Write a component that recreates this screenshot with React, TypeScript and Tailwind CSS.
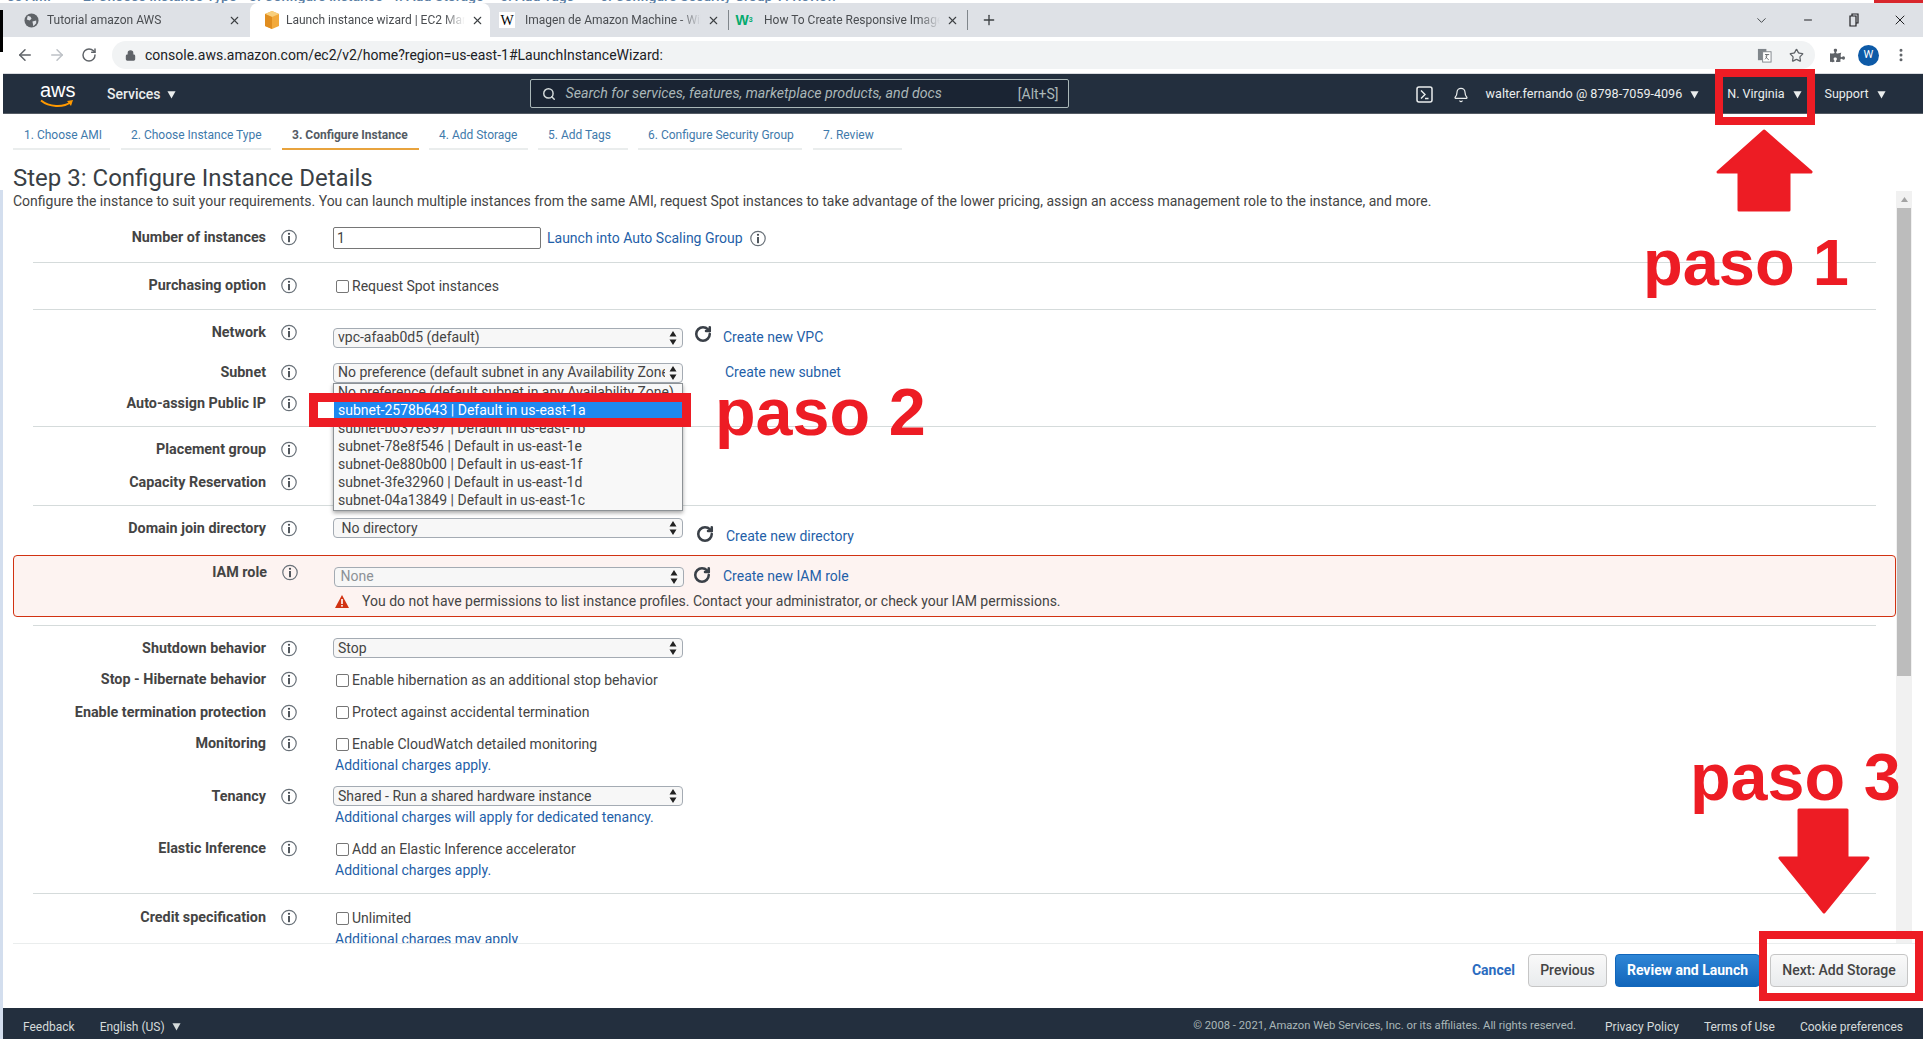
import React from 'react'
import { ArrowLeft, ArrowRight, RotateCw, Lock, Star, EllipsisVertical, X, Plus, ChevronDown, Minus, Bell, Search } from 'lucide-react'
import { FaPuzzlePiece } from 'react-icons/fa'

const Caret = ({ className = '' }: { className?: string }) => (
    <svg width="9" height="9" viewBox="0 0 10 10" className={className}>
        <path d="M0.5 1.5h9L5 9.5z" fill="currentColor" />
    </svg>
)

const Info = () => (
    <svg width="16" height="17" viewBox="0 0 16 17">
        <circle cx="8" cy="8.5" r="7.2" fill="none" stroke="#687078" strokeWidth="1.2" />
        <circle cx="8" cy="4.8" r="1.1" fill="#3f454c" />
        <rect x="7.1" y="7" width="1.8" height="6.2" fill="#3f454c" />
    </svg>
)

const Refresh = () => <RotateCw size={18} strokeWidth={3.4} className="text-[#3a4048]" />

const SelectBox = ({ value, muted }: { value: string, muted?: boolean }) => (
    <div className="relative w-[350px] h-[20px] rounded-[4px] border border-[#a4abb3] bg-[#f7f7f7] flex items-center pl-[4px] pr-[17px] overflow-hidden">
        <span className={`whitespace-nowrap overflow-hidden text-[14px] ${muted ? 'text-[#8c9196]' : 'text-[#444]'}`}>{value}</span>
        <svg width="8" height="14" viewBox="0 0 8 14" className="absolute right-[5px] top-[2px]">
            <path d="M4 0l3.5 5.5h-7zM4 14L0.5 8.5h7z" fill="#222" />
        </svg>
    </div>
)

const Row = ({ label, children, offset = 'pt-0', className = '' }: { label: string, children?: React.ReactNode, offset?: string, className?: string }) => (
    <div className={`flex items-start h-[24px] ${className}`}>
        <div className="w-[233px] h-[24px] pt-[1px] shrink-0 flex items-center justify-end text-[14.35px] font-bold text-[#444] whitespace-nowrap">{label}</div>
        <div className="w-[16px] h-[24px] shrink-0 ml-[15px] flex items-center"><Info /></div>
        <div className={`relative ml-[36px] flex-1 ${offset}`}>{children}</div>
    </div>
)

const Check = ({ text }: { text: string }) => (
    <div className="flex items-center h-[24px] pt-[1px] pl-[3px]">
        <div className="w-[13px] h-[13px] rounded-[2px] border border-[#767676] bg-white -mt-[1px]" />
        <span className="ml-[3px] text-[14px] text-[#444] whitespace-nowrap">{text}</span>
    </div>
)

const A = ({ children, className = '' }: { children: React.ReactNode, className?: string }) => (
    <span className={`text-[14px] text-[#1f5fa8] whitespace-nowrap ${className}`}>{children}</span>
)

const Divider = ({ className = '' }: { className?: string }) => <div className={`h-px bg-[#d5dbdb] ml-[30px] mr-[20px] ${className}`} />

const ChromeTab = ({ icon, title, active, className, gap }: { icon: React.ReactNode, title: string, active?: boolean, className: string, gap: string }) => (
    <div className={`flex items-center h-full ${active ? 'bg-white rounded-t-[8px]' : ''} ${className}`}>
        <div className="w-[16px] h-[16px] flex items-center justify-center shrink-0">{icon}</div>
        <span className={`flex-1 text-[12px] text-[#4a4d51] whitespace-nowrap overflow-hidden [mask-image:linear-gradient(to_right,black_88%,transparent)] ${gap}`}>{title}</span>
        <X size={13} strokeWidth={2} className="text-[#3c4043] shrink-0 ml-[6px]" />
    </div>
)

const wizardTabs = [
    { label: '1. Choose AMI', width: 'w-[97px] pl-[11px]' },
    { label: '2. Choose Instance Type', width: 'w-[150px] ml-[11px] pl-[10px]' },
    { label: '3. Configure Instance', width: 'w-[137px] ml-[11px] pl-[10px]', active: true },
    { label: '4. Add Storage', width: 'w-[99px] ml-[10px] pl-[10px]' },
    { label: '5. Add Tags', width: 'w-[90px] ml-[10px] pl-[10px]' },
    { label: '6. Configure Security Group', width: 'w-[164px] ml-[10px] pl-[10px]' },
    { label: '7. Review', width: 'w-[89px] ml-[11px] pl-[10px]' },
]

const subnets = [
    'No preference (default subnet in any Availability Zone)',
    'subnet-2578b643 | Default in us-east-1a',
    'subnet-b037e397 | Default in us-east-1b',
    'subnet-78e8f546 | Default in us-east-1e',
    'subnet-0e880b00 | Default in us-east-1f',
    'subnet-3fe32960 | Default in us-east-1d',
    'subnet-04a13849 | Default in us-east-1c',
]

const Annotations = () => (
    <>
        <div className="absolute z-20 left-[1715px] top-[69px] w-[100px] h-[56px] border-[8px] border-[#ed1c24]" />
        <div className="absolute z-20 left-[309px] top-[393px] w-[382px] h-[34px] border-[9px] border-[#ed1c24]" />
        <div className="absolute z-20 left-[318px] top-[402px] w-[16px] h-[16px] bg-white" />
        <div className="absolute z-20 left-[1759px] top-[931px] w-[164px] h-[70px] border-[8px] border-[#ed1c24]" />
        <svg className="absolute z-20 left-[1715px] top-[128px]" width="100" height="86" viewBox="0 0 100 86">
            <path d="M49 3L96 44H74V82H24V44H3z" fill="#ed1c24" stroke="#ed1c24" strokeWidth="3" strokeLinejoin="round" />
        </svg>
        <svg className="absolute z-20 left-[1776px] top-[807px]" width="96" height="108" viewBox="0 0 96 108">
            <path d="M23 3H71V51H92L48 105L4 51H23z" fill="#ed1c24" stroke="#ed1c24" strokeWidth="3" strokeLinejoin="round" />
        </svg>
        <div className="absolute z-20 left-[1643px] top-[230px] text-[65px] leading-none font-bold text-[#ed1c24] whitespace-nowrap [font-family:'Liberation_Sans',sans-serif]">paso 1</div>
        <div className="absolute z-20 left-[715px] top-[379px] text-[66.5px] leading-none font-bold text-[#ed1c24] whitespace-nowrap [font-family:'Liberation_Sans',sans-serif]">paso 2</div>
        <div className="absolute z-20 left-[1690px] top-[744px] text-[66.5px] leading-none font-bold text-[#ed1c24] whitespace-nowrap [font-family:'Liberation_Sans',sans-serif]">paso 3</div>
    </>
)

export default function App() {
    return (
        <div className="relative w-[1923px] h-[1039px] overflow-hidden bg-white flex [font-family:Roboto,sans-serif]">
            {/* left edge of the captured desktop */}
            <div className="w-[3px] shrink-0 flex flex-col">
                <div className="h-[3px] bg-white" />
                <div className="h-[7px] bg-[#dee1e6]" />
                <div className="h-[42px] bg-black" />
                <div className="h-[138px] bg-white" />
                <div className="flex-1 bg-[#d3deee]" />
            </div>

            <div className="flex-1 min-w-0 flex flex-col">
                {/* clipped page behind the browser */}
                <div className="h-[3px] overflow-hidden flex text-[14px] font-medium leading-[14px] text-[#5b7ea3] whitespace-nowrap">
                    <div className="-mt-[11px] flex">
                        <span className="w-[80px] text-right pr-[32px]">se AMI</span>
                        <span className="w-[166px]">2. Choose Instance Type</span>
                        <span className="w-[142px]">3. Configure Instance</span>
                        <span className="w-[109px]">4. Add Storage</span>
                        <span className="w-[100px]">5. Add Tags</span>
                        <span className="w-[177px]">6. Configure Security Group</span>
                        <span>7. Review</span>
                    </div>
                    <div className="ml-auto w-[49px] h-[3px] bg-[#d8262c]" />
                </div>

                {/* tab strip */}
                <div className="h-[34px] bg-[#dee1e6] flex items-center">
                    <ChromeTab className="w-[240px] pl-[20px] pr-[2px]" gap="ml-[8px]" title="Tutorial amazon AWS" icon={
                        <svg width="15" height="15" viewBox="0 0 16 16">
                            <circle cx="8" cy="8" r="7.5" fill="#5f6368" />
                            <path d="M4 3l3 1 1 2-2 2-3-1zM9 9l4-1 0 3-3 3z" fill="#dee1e6" />
                        </svg>
                    } />
                    <ChromeTab active className="w-[240px] ml-[7px] pl-[14px] pr-[6px]" gap="ml-[6px]" title="Launch instance wizard | EC2 Management" icon={
                        <svg width="14" height="18" viewBox="0 0 14 18">
                            <path d="M7 0L14 3V15L7 18L0 15V3z" fill="#f2a93b" />
                            <path d="M7 0L14 3L7 6L0 3z" fill="#f8cf7c" />
                            <path d="M7 6V18L0 15V3z" fill="#e08d1f" />
                        </svg>
                    } />
                    <ChromeTab className="w-[229px] ml-[9px] pr-[8px]" gap="ml-[10px]" title="Imagen de Amazon Machine - Wikipedia" icon={
                        <span className="w-[16px] h-[16px] bg-white flex items-center justify-center text-[14px] text-black [font-family:'Liberation_Serif',serif]">W</span>
                    } />
                    <div className="w-px h-[20px] bg-[#80868b]" />
                    <ChromeTab className="w-[238px] pl-[7px] pr-[8px]" gap="ml-[12px]" title="How To Create Responsive Images" icon={
                        <span className="text-[14px] font-bold text-[#04aa6d] leading-none [font-family:'Liberation_Sans',sans-serif]">W<sup className="text-[7px]">3</sup></span>
                    } />
                    <div className="w-px h-[20px] bg-[#80868b]" />
                    <Plus size={16} strokeWidth={2} className="ml-[13px] text-[#3c4043]" />
                    <ChevronDown size={15} strokeWidth={1.5} className="ml-auto text-[#3c4043]" />
                    <Minus size={12} strokeWidth={2} className="ml-[33px] text-[#202124]" />
                    <svg width="10" height="14" viewBox="0 0 10 14" className="ml-[35px]">
                        <path d="M3 3V1H9V10H7M1 3H7V13H1z" fill="none" stroke="#202124" strokeWidth="1.2" />
                    </svg>
                    <X size={16} strokeWidth={1.5} className="ml-[33px] mr-[15px] text-[#202124]" />
                </div>

                {/* address bar */}
                <div className="h-[37px] bg-white border-b border-[#dadce0] flex items-center">
                    <ArrowLeft size={18} strokeWidth={2} className="ml-[13px] text-[#5f6368]" />
                    <ArrowRight size={18} strokeWidth={2} className="ml-[14px] text-[#bdc1c6]" />
                    <RotateCw size={16} strokeWidth={2.2} className="ml-[15px] text-[#5f6368]" />
                    <div className="ml-[15px] w-[1703px] h-[28px] rounded-full bg-[#f1f3f4] flex items-center pl-[13px] pr-[11px]">
                        <Lock size={11} strokeWidth={2.5} fill="#5f6368" className="text-[#5f6368]" />
                        <span className="ml-[9px] text-[14px] text-[#202124] whitespace-nowrap">console.aws.amazon.com/ec2/v2/home?region=us-east-1#LaunchInstanceWizard:</span>
                        <svg width="15" height="15" viewBox="0 0 16 16" className="ml-auto">
                            <rect x="1" y="1" width="9" height="12" fill="#80868b" />
                            <rect x="6" y="4" width="9" height="11" fill="#fff" stroke="#80868b" />
                            <path d="M8.5 7h4.5M10.5 7c0 3-1 4-2 5M9.5 9c1 2 2 3 3 3.5" stroke="#5f6368" fill="none" />
                        </svg>
                        <Star size={15} strokeWidth={2} className="ml-[17px] text-[#5f6368]" />
                    </div>
                    <FaPuzzlePiece size={15} className="ml-[15px] text-[#5f6368]" />
                    <div className="ml-[13px] w-[21px] h-[21px] rounded-full bg-[#0d5aa7] flex items-center justify-center text-white text-[11px]">W</div>
                    <EllipsisVertical size={16} strokeWidth={2.5} className="ml-[14px] text-[#5f6368]" />
                </div>

                {/* aws nav */}
                <div className="h-[40px] bg-[#232f3e] border-b border-[#545b64] flex items-center pt-[2px] text-[#eaeded]">
                    <div className="relative ml-[37px] w-[33px] h-[32px] shrink-0">
                        <span className="absolute left-0 top-[1px] text-[20px] leading-[20px] text-white [font-family:'Liberation_Sans',sans-serif]">aws</span>
                        <svg width="34" height="10" viewBox="0 0 34 10" className="absolute left-0 top-[20px]">
                            <path d="M1 1.5C9 8 23 9 31 3" fill="none" stroke="#ff9900" strokeWidth="2" />
                            <path d="M27 2l6-1-2 6z" fill="#ff9900" />
                        </svg>
                    </div>
                    <span className="ml-[34px] text-[14px] font-medium">Services</span>
                    <Caret className="ml-[6px]" />
                    <div className="ml-[354px] w-[539px] h-[29px] -mt-[2px] rounded-[2px] border border-[#aab7b8] bg-[#1a2433] flex items-center pl-[11px] pr-[9px] pt-[1px] text-[#aab7b8]">
                        <Search size={14} strokeWidth={2.5} className="text-[#d5dbdb]" />
                        <span className="ml-[10px] text-[14.2px] italic whitespace-nowrap">Search for services, features, marketplace products, and docs</span>
                        <span className="ml-auto text-[14px]">[Alt+S]</span>
                    </div>
                    <svg width="17" height="17" viewBox="0 0 17 17" className="ml-[347px]">
                        <rect x="1" y="1" width="15" height="15" rx="2" fill="none" stroke="#eaeded" strokeWidth="1.5" />
                        <path d="M5 4.5L9 8.5L5 12.5M9 12.5h3.5" fill="none" stroke="#eaeded" strokeWidth="1.4" />
                    </svg>
                    <Bell size={16} strokeWidth={1.8} className="ml-[20px]" />
                    <span className="ml-[17px] text-[12.6px] whitespace-nowrap">walter.fernando @ 8798-7059-4096</span>
                    <Caret className="ml-[8px]" />
                    <span className="ml-[28px] text-[12.5px] whitespace-nowrap">N. Virginia</span>
                    <Caret className="ml-[8px]" />
                    <span className="ml-[23px] text-[12.5px]">Support</span>
                    <Caret className="ml-[8px]" />
                </div>

                {/* wizard steps */}
                <div className="h-[36px] flex items-end pl-[10px]">
                    {wizardTabs.map((tab, i) => (
                        <div key={i} className={`h-[36px] pt-[13px] text-[12px] leading-[16px] whitespace-nowrap border-b-[2px] ${tab.width} ${tab.active ? 'border-[#e8a33d] font-bold text-[#545b64]' : 'border-[#eaeded] text-[#3f7aab]'}`}>{tab.label}</div>
                    ))}
                </div>

                {/* wizard body */}
                <div className="h-[793px] flex">
                    <div className="flex-1 min-w-0 flex flex-col">
                        <div className="pl-[10px] pt-[15px]">
                            <h1 className="text-[24px] leading-[26px] text-[#3a3f45]">Step 3: Configure Instance Details</h1>
                            <p className="text-[14px] leading-[20px] text-[#444] whitespace-nowrap">Configure the instance to suit your requirements. You can launch multiple instances from the same AMI, request Spot instances to take advantage of the lower pricing, assign an access management role to the instance, and more.</p>
                        </div>
                        <div className="mt-[4px] flex-1 overflow-hidden">
                            <div className="ml-[30px] mt-[10px]">
                                <Row label="Number of instances" offset="pt-[2px]">
                                    <div className="flex items-center">
                                        <div className="w-[208px] h-[22px] border border-[#767676] rounded-[2px] text-[14px] text-[#444] pl-[3px] leading-[20px]">1</div>
                                        <A className="ml-[6px]">Launch into Auto Scaling Group</A>
                                        <span className="ml-[7px] flex"><Info /></span>
                                    </div>
                                </Row>
                            </div>
                            <Divider className="mt-[13px]" />
                            <div className="ml-[30px] mt-[10px]">
                                <Row label="Purchasing option" offset="pt-[1px]"><Check text="Request Spot instances" /></Row>
                            </div>
                            <Divider className="mt-[12px]" />
                            <div className="ml-[30px] mt-[10px]">
                                <Row label="Network" offset="pt-[7px]">
                                    <div className="flex items-center">
                                        <SelectBox value="vpc-afaab0d5 (default)" />
                                        <span className="ml-[11px] -mt-[7px] flex"><Refresh /></span>
                                        <A className="ml-[11px]">Create new VPC</A>
                                    </div>
                                </Row>
                                <Row label="Subnet" offset="pt-[2px]" className="mt-[16px]">
                                    <div className="flex items-center">
                                        <SelectBox value="No preference (default subnet in any Availability Zone)" />
                                        <A className="ml-[42px]">Create new subnet</A>
                                    </div>
                                    <div className="absolute left-0 top-[23px] w-[350px] h-[128px] border border-[#8d9296] bg-[#f8f8f8] shadow-[0_2px_4px_rgba(0,0,0,0.35)] z-10">
                                        {subnets.map((s, i) => (
                                            <div key={i} className={`h-[18px] pl-[4px] text-[14px] leading-[17px] whitespace-nowrap overflow-hidden ${i === 1 ? 'bg-[#1e88f0] text-white' : 'text-[#444]'}`}>{s}</div>
                                        ))}
                                    </div>
                                </Row>
                                <Row label="Auto-assign Public IP" className="mt-[7px]" />
                            </div>
                            <Divider className="mt-[11px]" />
                            <div className="ml-[30px] mt-[10px]">
                                <Row label="Placement group" />
                                <Row label="Capacity Reservation" className="mt-[9px]" />
                            </div>
                            <Divider className="mt-[11px]" />
                            <div className="ml-[30px] mt-[10px]">
                                <Row label="Domain join directory" offset="pt-[2px]">
                                    <div className="flex items-start">
                                        <SelectBox value={'\u00a0No directory'} />
                                        <span className="ml-[13px] mt-[7px] flex"><Refresh /></span>
                                        <A className="ml-[12px] mt-[8px]">Create new directory</A>
                                    </div>
                                </Row>
                            </div>

                            {/* iam role error box */}
                            <div className="ml-[10px] mt-[15px] h-[62px] border border-[#d13212] rounded-[4px] bg-[#fdf3f1] pl-[20px] pt-[4px]">
                                <Row label="IAM role" offset="pt-[6px]">
                                    <div className="flex items-center">
                                        <SelectBox muted value={'\u200aNone'} />
                                        <span className="ml-[9px] -mt-[3px] flex"><Refresh /></span>
                                        <A className="ml-[12px]">Create new IAM role</A>
                                    </div>
                                    <div className="flex items-center mt-[4px]">
                                        <svg width="14" height="13" viewBox="0 0 14 13" className="ml-[1px]">
                                            <path d="M7 0L14 13H0z" fill="#d13212" />
                                            <rect x="6.2" y="4" width="1.6" height="5" fill="#fff" />
                                            <rect x="6.2" y="10" width="1.6" height="1.6" fill="#fff" />
                                        </svg>
                                        <span className="ml-[13px] text-[14px] text-[#444] whitespace-nowrap">You do not have permissions to list instance profiles. Contact your administrator, or check your IAM permissions.</span>
                                    </div>
                                </Row>
                            </div>

                            <Divider className="mt-[8px]" />
                            <div className="ml-[30px] mt-[10px]">
                                <Row label="Shutdown behavior" offset="pt-[2px]"><SelectBox value="Stop" /></Row>
                                <Row label="Stop - Hibernate behavior" offset="pt-[1px]" className="mt-[7px]"><Check text="Enable hibernation as an additional stop behavior" /></Row>
                                <Row label="Enable termination protection" className="mt-[9px]"><Check text="Protect against accidental termination" /></Row>
                                <Row label="Monitoring" offset="pt-[1px]" className="mt-[7px]">
                                    <Check text="Enable CloudWatch detailed monitoring" />
                                    <A className="block ml-[2px] -mt-[1px]">Additional charges apply.</A>
                                </Row>
                                <Row label="Tenancy" offset="pt-[2px]" className="mt-[29px]">
                                    <SelectBox value="Shared - Run a shared hardware instance" />
                                    <A className="block ml-[2px] mt-[1px]">Additional charges will apply for dedicated tenancy.</A>
                                </Row>
                                <Row label="Elastic Inference" offset="pt-[1px]" className="mt-[28px]">
                                    <Check text="Add an Elastic Inference accelerator" />
                                    <A className="block ml-[2px] -mt-[1px]">Additional charges apply.</A>
                                </Row>
                            </div>
                            <Divider className="mt-[33px]" />
                            <div className="ml-[30px] mt-[11px]">
                                <Row label="Credit specification" offset="pt-[1px]">
                                    <Check text="Unlimited" />
                                    <A className="block ml-[2px] -mt-[1px]">Additional charges may apply</A>
                                </Row>
                            </div>
                        </div>
                    </div>

                    {/* scrollbar */}
                    <div className="w-[16px] mt-[41px] mr-[11px] shrink-0 bg-[#f1f1f1] flex flex-col items-center">
                        <div className="h-[17px] flex items-center">
                            <svg width="7" height="5" viewBox="0 0 7 5"><path d="M3.5 0L7 5H0z" fill="#a3a3a3" /></svg>
                        </div>
                        <div className="w-[14px] h-[468px] bg-[#bcbcbc]" />
                    </div>
                </div>

                {/* wizard actions */}
                <div className="h-[65px] ml-[10px] border-t border-[#eaeded] flex items-start justify-end pt-[10px] pr-[15px] text-[14px] font-medium">
                    <span className="mr-[13px] leading-[33px] font-bold text-[#2b6cc0]">Cancel</span>
                    <div className="w-[79px] h-[33px] rounded-[4px] border border-[#c6c6c6] bg-gradient-to-b from-[#f9f9f9] to-[#e9ebed] text-[#444] flex items-center justify-center">Previous</div>
                    <div className="ml-[8px] w-[145px] h-[33px] rounded-[4px] border border-[#1166bb] bg-gradient-to-b from-[#2e86d6] to-[#1166bb] text-white font-bold flex items-center justify-center">Review and Launch</div>
                    <div className="ml-[10px] w-[138px] h-[33px] rounded-[4px] border border-[#c6c6c6] bg-gradient-to-b from-[#f9f9f9] to-[#e9ebed] text-[#444] flex items-center justify-center">Next: Add Storage</div>
                </div>

                {/* console footer */}
                <div className="h-[31px] bg-[#232f3e] flex items-center pt-[6px] text-[12px] text-[#d5dbdb] whitespace-nowrap">
                    <span className="ml-[20px]">Feedback</span>
                    <span className="ml-[25px]">English (US)</span>
                    <Caret className="ml-[7px]" />
                    <span className="ml-auto text-[11.25px] text-[#aab7b8]">© 2008 - 2021, Amazon Web Services, Inc. or its affiliates. All rights reserved.</span>
                    <span className="ml-[29px]">Privacy Policy</span>
                    <span className="ml-[25px]">Terms of Use</span>
                    <span className="ml-[25px] mr-[20px]">Cookie preferences</span>
                </div>
            </div>

            <Annotations />
        </div>
    )
}
